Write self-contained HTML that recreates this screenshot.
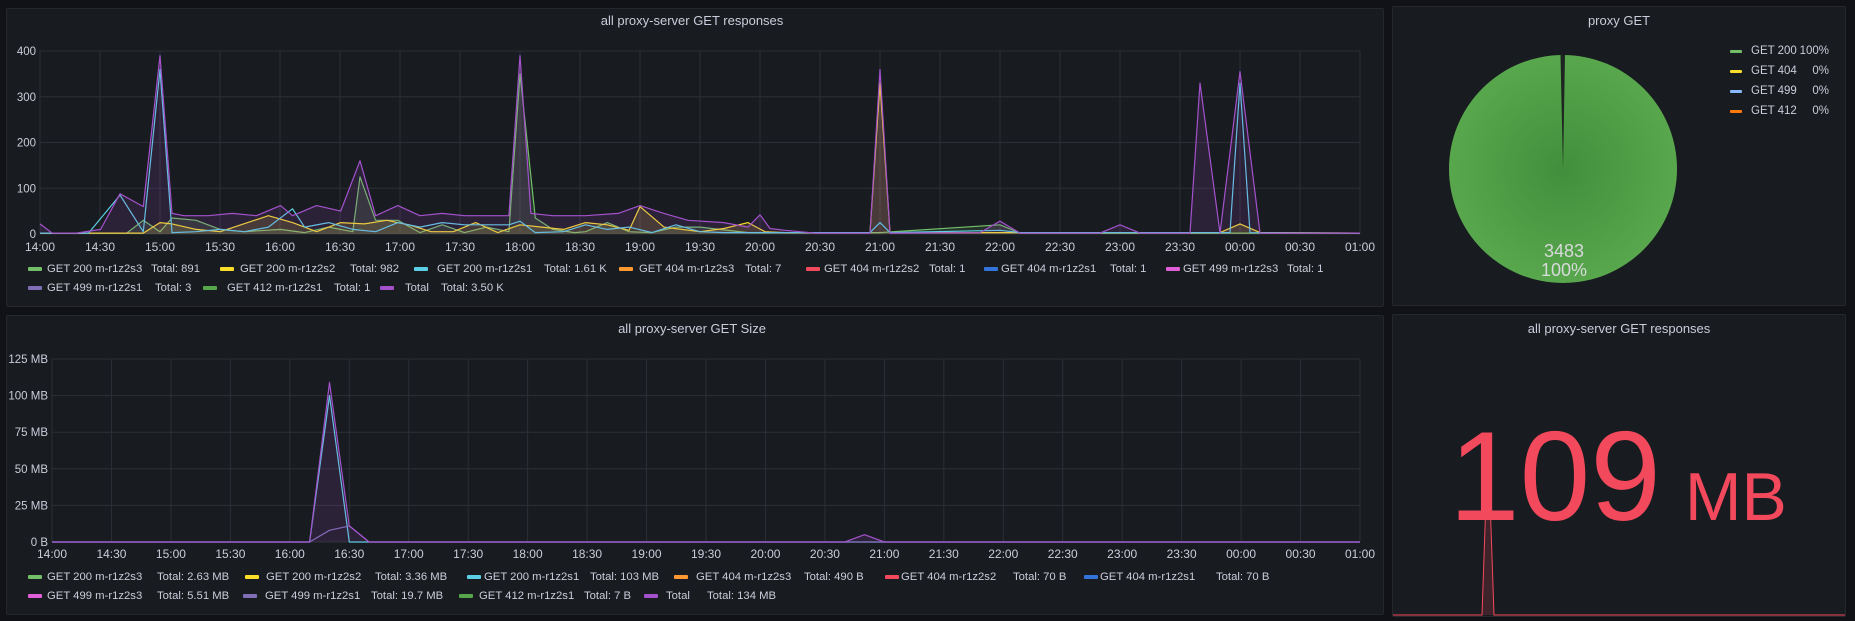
<!DOCTYPE html>
<html><head><meta charset="utf-8">
<style>
*{margin:0;padding:0;box-sizing:border-box}
body{width:1855px;height:621px;background:#111217;font-family:"Liberation Sans",sans-serif;color:#ccccdc;position:relative;overflow:hidden}
.p{position:absolute;background:#181b1f;border:1px solid #25272d;border-radius:2px}
.t{position:absolute;font-size:13px;color:#ccccdc;white-space:nowrap;transform:translateX(-50%)}
.l{position:absolute;font-size:11.3px;line-height:14px;color:#ccccdc;white-space:nowrap}
.sw{position:absolute;width:14px;height:4px;border-radius:1px}
.pl{position:absolute;font-size:11.5px;line-height:14px;color:#ccccdc;white-space:nowrap}
svg{position:absolute;left:0;top:0}
</style></head><body>
<div class="p" style="left:6px;top:8px;width:1378px;height:299px"></div>
<div class="p" style="left:6px;top:315px;width:1378px;height:300px"></div>
<div class="p" style="left:1392px;top:6px;width:454px;height:300px"></div>
<div class="p" style="left:1392px;top:314px;width:454px;height:303px"></div>

<div class="t" style="left:692px;top:13px">all proxy-server GET responses</div>
<div class="t" style="left:692px;top:321px">all proxy-server GET Size</div>
<div class="t" style="left:1619px;top:13px">proxy GET</div>
<div class="t" style="left:1619px;top:321px">all proxy-server GET responses</div>

<svg id="s" width="1855" height="621"></svg>

<!-- top legend -->
<div class="sw" style="left:28px;top:267px;background:#73bf69"></div><div class="l" style="left:47px;top:262px">GET 200 m-r1z2s3</div><div class="l" style="left:151px;top:262px">Total: 891</div>
<div class="sw" style="left:220px;top:267px;background:#fade2a"></div><div class="l" style="left:240px;top:262px">GET 200 m-r1z2s2</div><div class="l" style="left:350px;top:262px">Total: 982</div>
<div class="sw" style="left:414px;top:267px;background:#5ccfe6"></div><div class="l" style="left:437px;top:262px">GET 200 m-r1z2s1</div><div class="l" style="left:544px;top:262px">Total: 1.61 K</div>
<div class="sw" style="left:619px;top:267px;background:#ff9830"></div><div class="l" style="left:639px;top:262px">GET 404 m-r1z2s3</div><div class="l" style="left:745px;top:262px">Total: 7</div>
<div class="sw" style="left:806px;top:267px;background:#f2495c"></div><div class="l" style="left:824px;top:262px">GET 404 m-r1z2s2</div><div class="l" style="left:929px;top:262px">Total: 1</div>
<div class="sw" style="left:984px;top:267px;background:#3274d9"></div><div class="l" style="left:1001px;top:262px">GET 404 m-r1z2s1</div><div class="l" style="left:1110px;top:262px">Total: 1</div>
<div class="sw" style="left:1166px;top:267px;background:#e05fd8"></div><div class="l" style="left:1183px;top:262px">GET 499 m-r1z2s3</div><div class="l" style="left:1287px;top:262px">Total: 1</div>
<div class="sw" style="left:28px;top:286px;background:#806eb7"></div><div class="l" style="left:47px;top:281px">GET 499 m-r1z2s1</div><div class="l" style="left:155px;top:281px">Total: 3</div>
<div class="sw" style="left:203px;top:286px;background:#56a64b"></div><div class="l" style="left:227px;top:281px">GET 412 m-r1z2s1</div><div class="l" style="left:334px;top:281px">Total: 1</div>
<div class="sw" style="left:380px;top:286px;background:#a352cc"></div><div class="l" style="left:405px;top:281px">Total</div><div class="l" style="left:441px;top:281px">Total: 3.50 K</div>

<!-- bottom legend -->
<div class="sw" style="left:28px;top:575px;background:#73bf69"></div><div class="l" style="left:47px;top:570px">GET 200 m-r1z2s3</div><div class="l" style="left:157px;top:570px">Total: 2.63 MB</div>
<div class="sw" style="left:245px;top:575px;background:#fade2a"></div><div class="l" style="left:266px;top:570px">GET 200 m-r1z2s2</div><div class="l" style="left:375px;top:570px">Total: 3.36 MB</div>
<div class="sw" style="left:467px;top:575px;background:#5ccfe6"></div><div class="l" style="left:484px;top:570px">GET 200 m-r1z2s1</div><div class="l" style="left:590px;top:570px">Total: 103 MB</div>
<div class="sw" style="left:674px;top:575px;background:#ff9830"></div><div class="l" style="left:696px;top:570px">GET 404 m-r1z2s3</div><div class="l" style="left:804px;top:570px">Total: 490 B</div>
<div class="sw" style="left:885px;top:575px;background:#f2495c"></div><div class="l" style="left:901px;top:570px">GET 404 m-r1z2s2</div><div class="l" style="left:1013px;top:570px">Total: 70 B</div>
<div class="sw" style="left:1084px;top:575px;background:#3274d9"></div><div class="l" style="left:1100px;top:570px">GET 404 m-r1z2s1</div><div class="l" style="left:1216px;top:570px">Total: 70 B</div>
<div class="sw" style="left:28px;top:594px;background:#e05fd8"></div><div class="l" style="left:47px;top:589px">GET 499 m-r1z2s3</div><div class="l" style="left:157px;top:589px">Total: 5.51 MB</div>
<div class="sw" style="left:243px;top:594px;background:#806eb7"></div><div class="l" style="left:265px;top:589px">GET 499 m-r1z2s1</div><div class="l" style="left:371px;top:589px">Total: 19.7 MB</div>
<div class="sw" style="left:459px;top:594px;background:#56a64b"></div><div class="l" style="left:479px;top:589px">GET 412 m-r1z2s1</div><div class="l" style="left:584px;top:589px">Total: 7 B</div>
<div class="sw" style="left:644px;top:594px;background:#a352cc"></div><div class="l" style="left:666px;top:589px">Total</div><div class="l" style="left:707px;top:589px">Total: 134 MB</div>

<!-- pie legend -->
<div class="sw" style="left:1730px;top:50px;background:#73bf69;width:12px;height:3px"></div><div class="pl" style="left:1751px;top:44px">GET 200</div><div class="pl" style="left:1798px;top:44px;width:31px;text-align:right">100%</div>
<div class="sw" style="left:1730px;top:70px;background:#fade2a;width:12px;height:3px"></div><div class="pl" style="left:1751px;top:64px">GET 404</div><div class="pl" style="left:1798px;top:64px;width:31px;text-align:right">0%</div>
<div class="sw" style="left:1730px;top:90px;background:#8ab8ff;width:12px;height:3px"></div><div class="pl" style="left:1751px;top:84px">GET 499</div><div class="pl" style="left:1798px;top:84px;width:31px;text-align:right">0%</div>
<div class="sw" style="left:1730px;top:110px;background:#ff780a;width:12px;height:3px"></div><div class="pl" style="left:1751px;top:104px">GET 412</div><div class="pl" style="left:1798px;top:104px;width:31px;text-align:right">0%</div>

<div style="position:absolute;left:1449px;top:413px;font-size:127px;line-height:127px;color:#f2495c;white-space:nowrap">109<span style="font-size:68px;margin-left:24px">MB</span></div>

<script>
var s=document.getElementById('s'),h='';
h+='<defs><radialGradient id="g" cx="50%" cy="50%" r="50%"><stop offset="0" stop-color="#418f3c"/><stop offset="1" stop-color="#58a74d"/></radialGradient></defs>';
function grid(x0,x1,ys,labs,xt){
 for(var i=0;i<=22;i++){var x=x0+(x1-x0)*i/22;h+='<line x1="'+x+'" y1="'+ys[ys.length-1]+'" x2="'+x+'" y2="'+ys[0]+'" stroke="#2c2f35"/>';
  var hh=(14+Math.floor(i/2))%24;var lab=(hh<10?'0':'')+hh+':'+(i%2?'30':'00');
  h+='<text x="'+x+'" y="'+xt+'" fill="#ccccdc" font-size="12" text-anchor="middle" font-family="Liberation Sans">'+lab+'</text>';}
 ys.forEach(function(y,j){h+='<line x1="'+x0+'" y1="'+y+'" x2="'+x1+'" y2="'+y+'" stroke="#2c2f35"/>';
  h+='<text x="'+(x0-4)+'" y="'+(y+4)+'" fill="#ccccdc" font-size="11.5" text-anchor="end" font-family="Liberation Sans">'+labs[j]+'</text>';});
}
grid(40,1360,[234,188.25,142.5,96.75,51],['0','100','200','300','400'],251);
grid(52,1360,[542,505.4,468.8,432.2,395.6,359],['0 B','25 MB','50 MB','75 MB','100 MB','125 MB'],558);
var A=[[0,0],[33,40],[45,60],[128,160],[200,240],[255,300],[305,360],[415,415],[660,660]];
function f(t){for(var i=1;i<A.length;i++){if(t<=A[i][0]){var a=A[i-1],b=A[i];return a[1]+(t-a[0])*(b[1]-a[1])/(b[0]-a[0]);}}return t;}
function ser(pts,X,Y,col,fill,y0,map){var d='';pts.forEach(function(p,i){var t=map?f(p[0]):p[0];d+=(i?'L':'M')+X(t).toFixed(1)+' '+Y(p[1]).toFixed(1)});
 if(fill)h+='<path d="'+d+'L'+X(map?f(pts[pts.length-1][0]):pts[pts.length-1][0])+' '+y0+'L'+X(pts[0][0])+' '+y0+'Z" fill="'+col+'" fill-opacity="0.15"/>';
 h+='<path d="'+d+'" fill="none" stroke="'+col+'" stroke-width="1.2" stroke-linejoin="round"/>';}
var X=function(t){return 40+t*2},Y=function(v){return 234-v*0.4575};
ser([[0,2],[25,2],[35,2],[40,30],[45,5],[50,35],[60,30],[70,10],[80,5],[95,10],[105,3],[115,15],[125,5],[128,125],[135,30],[145,30],[155,3],[165,20],[175,3],[185,15],[195,5],[200,350],[207,35],[215,10],[225,3],[230,5],[240,25],[250,5],[260,3],[270,15],[280,15],[300,3],[420,3],[480,20],[490,2],[660,2]],X,Y,'#73bf69',1,234,1);
ser([[0,2],[40,2],[45,25],[50,22],[60,10],[70,5],[90,40],[100,25],[110,5],[120,25],[130,22],[140,30],[150,20],[160,5],[170,5],[180,25],[190,3],[200,20],[210,15],[220,10],[230,25],[240,20],[250,8],[255,60],[265,15],[280,5],[290,12],[300,25],[310,5],[330,3],[415,3],[420,330],[425,3],[590,3],[600,22],[610,3],[660,2]],X,Y,'#fade2a',1,234,1);
ser([[0,2],[20,2],[33,85],[40,5],[45,360],[50,3],[60,5],[70,10],[80,5],[90,15],[100,55],[105,15],[115,25],[125,10],[135,5],[145,25],[155,15],[165,25],[175,20],[195,20],[200,28],[207,3],[220,5],[230,20],[240,10],[250,15],[260,3],[270,20],[280,5],[290,3],[415,3],[420,25],[425,3],[480,8],[490,3],[595,3],[600,330],[605,3],[660,2]],X,Y,'#5ccfe6',0,234,1);
ser([[0,22],[5,2],[15,2],[25,10],[33,88],[40,60],[45,390],[50,45],[55,40],[65,40],[75,45],[85,40],[95,62],[100,40],[110,62],[120,50],[128,160],[135,40],[145,62],[155,40],[165,45],[175,40],[185,40],[195,40],[200,390],[205,45],[215,40],[230,40],[245,45],[255,62],[265,45],[275,30],[290,25],[300,15],[305,42],[315,12],[330,8],[345,5],[360,2],[415,2],[420,360],[425,2],[470,3],[480,28],[490,2],[530,2],[540,20],[550,2],[575,2],[580,330],[590,2],[600,355],[610,2],[660,2]],X,Y,'#a352cc',1,234,1);
var X2=function(t){return 52+t*1.9818},Y2=function(v){return 542-v*1.464};
ser([[0,0],[130,0],[140,100],[150,0],[660,0]],X2,Y2,'#5ccfe6',0,542,0);
ser([[0,0],[130,0],[140,8],[150,11],[160,0],[660,0]],X2,Y2,'#806eb7',0,542,0);
ser([[0,0],[130,0],[140,109],[150,11],[160,0],[400,0],[410,5],[420,0],[660,0]],X2,Y2,'#a352cc',1,542,0);
h+='<circle cx="1563" cy="169" r="114" fill="url(#g)"/>';
h+='<path d="M1563 169 L1560.5 55 L1565 55 Z" fill="#1e2420"/>';
h+='<text x="1564" y="257" fill="#d8d9da" font-size="18" text-anchor="middle" font-family="Liberation Sans">3483</text>';
h+='<text x="1564" y="276" fill="#d8d9da" font-size="18" text-anchor="middle" font-family="Liberation Sans">100%</text>';
h+='<path d="M1393 615 L1482 615 L1488 440 L1494 615 L1845 615 Z" fill="#f2495c" fill-opacity="0.18"/>';
h+='<path d="M1393 615 L1482 615 L1488 440 L1494 615 L1845 615" fill="none" stroke="#f2495c" stroke-width="1"/>';
s.innerHTML=h;
</script>
</body></html>
